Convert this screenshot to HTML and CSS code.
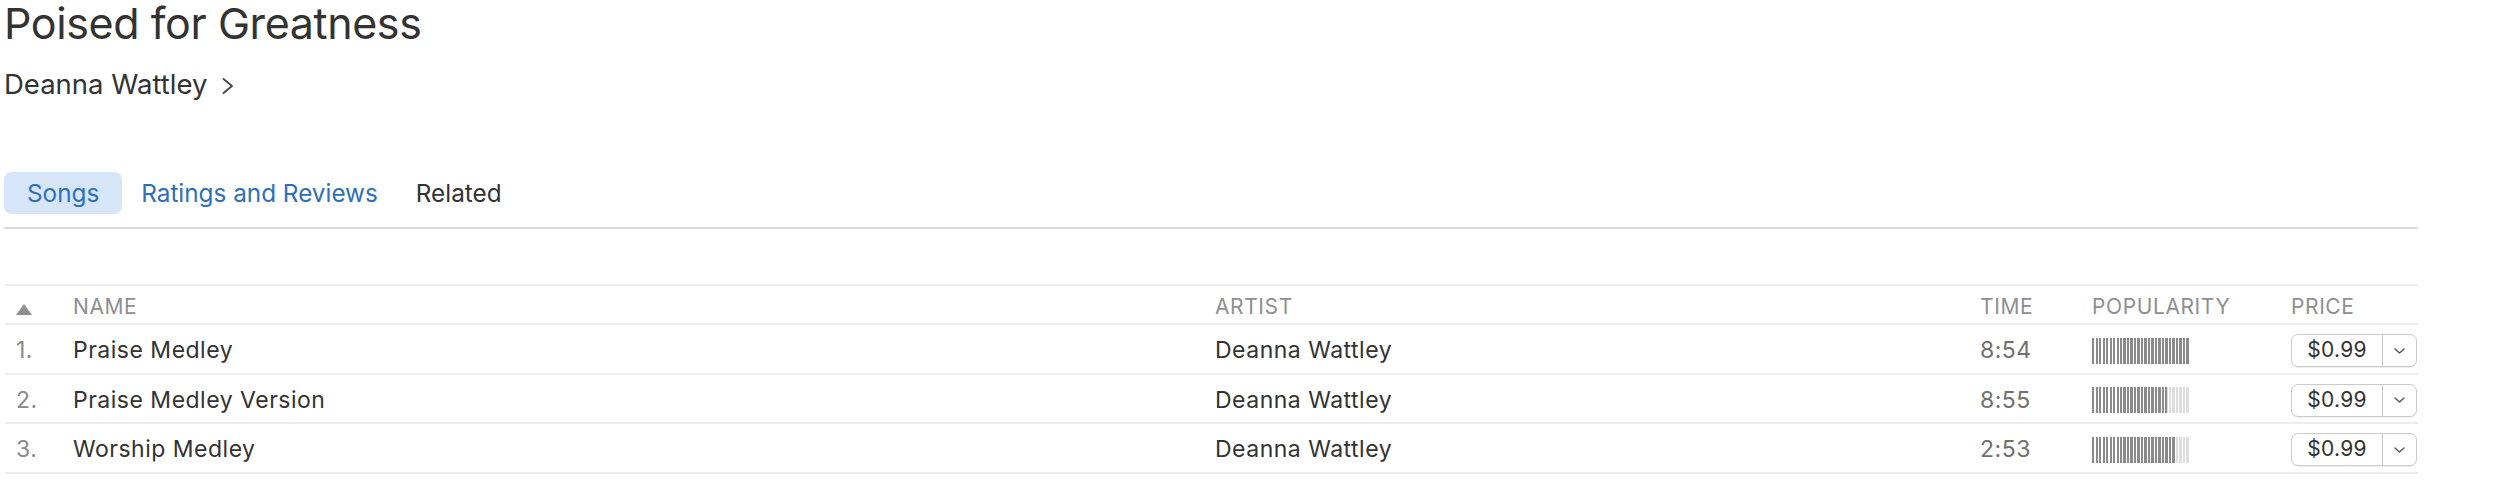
FILE: index.html
```html
<!DOCTYPE html>
<html lang="en">
<head>
<meta charset="utf-8">
<title>Poised for Greatness</title>
<link rel="stylesheet" href="styles.css">
</head>
<body>
<div class="page">
  <header class="album-header">
    <h1 class="title">Poised for Greatness</h1>
    <a class="artist-link" href="#">Deanna Wattley<svg class="chev" width="12" height="16" viewBox="0 0 12 16"><path d="M1.5 1 L10 8 L1.5 15" fill="none" stroke="#444" stroke-width="1.8" stroke-linecap="round" stroke-linejoin="round"/></svg></a>
  </header>

  <nav class="tabs">
    <span class="tab active">Songs</span>
    <span class="tab">Ratings and Reviews</span>
    <span class="tab plain">Related</span>
  </nav>

  <div class="tracks">
    <div class="row head">
      <div class="cell num"><svg class="sort" width="16" height="11" viewBox="0 0 16 11"><path d="M8 0 L16 11 L0 11 Z" fill="#8e8e93"/></svg></div>
      <div class="cell">NAME</div>
      <div class="cell">ARTIST</div>
      <div class="cell">TIME</div>
      <div class="cell">POPULARITY</div>
      <div class="cell">PRICE</div>
    </div>

    <div class="row">
      <div class="cell num">1.</div>
      <div class="cell name">Praise Medley</div>
      <div class="cell artist">Deanna Wattley</div>
      <div class="cell time">8:54</div>
      <div class="cell pop"><span class="bars"><span class="bars-fill" style="width:100%"></span></span></div>
      <div class="cell price"><span class="price-btn"><span class="price-label">$0.99</span><span class="price-menu"><svg width="11" height="6" viewBox="0 0 11 6"><path d="M1 1 L5.5 5 L10 1" fill="none" stroke="#555" stroke-width="1.4" stroke-linecap="round" stroke-linejoin="round"/></svg></span></span></div>
    </div>

    <div class="row">
      <div class="cell num">2.</div>
      <div class="cell name">Praise Medley Version</div>
      <div class="cell artist">Deanna Wattley</div>
      <div class="cell time">8:55</div>
      <div class="cell pop"><span class="bars"><span class="bars-fill" style="width:77%"></span></span></div>
      <div class="cell price"><span class="price-btn"><span class="price-label">$0.99</span><span class="price-menu"><svg width="11" height="6" viewBox="0 0 11 6"><path d="M1 1 L5.5 5 L10 1" fill="none" stroke="#555" stroke-width="1.4" stroke-linecap="round" stroke-linejoin="round"/></svg></span></span></div>
    </div>

    <div class="row">
      <div class="cell num">3.</div>
      <div class="cell name">Worship Medley</div>
      <div class="cell artist">Deanna Wattley</div>
      <div class="cell time">2:53</div>
      <div class="cell pop"><span class="bars"><span class="bars-fill" style="width:86%"></span></span></div>
      <div class="cell price"><span class="price-btn"><span class="price-label">$0.99</span><span class="price-menu"><svg width="11" height="6" viewBox="0 0 11 6"><path d="M1 1 L5.5 5 L10 1" fill="none" stroke="#555" stroke-width="1.4" stroke-linecap="round" stroke-linejoin="round"/></svg></span></span></div>
    </div>
  </div>
</div>
</body>
</html>
```

FILE: styles.css
```css
* { box-sizing: border-box; }

html, body {
  margin: 0;
  padding: 0;
  background: #fff;
}

body {
  font-family: Inter, "Noto Sans", "Liberation Sans", sans-serif;
  color: #333;
}

.page {
  padding: 2px 0 0 4px;
  width: 2418px;
}

.album-header {
  display: flex;
  flex-direction: column;
  align-items: flex-start;
}

.title {
  margin: 0;
  font-size: 43px;
  line-height: 43px;
  font-weight: 400;
  color: #333;
  letter-spacing: -0.4px;
}

.artist-link {
  margin-top: 24px;
  font-size: 27.5px;
  line-height: 30px;
  color: #333;
  text-decoration: none;
}

.chev {
  margin-left: 15px;
  vertical-align: baseline;
}

.tabs {
  display: flex;
  margin-top: 72.5px;
  height: 42px;
}

.tab {
  font-size: 24.3px;
  line-height: 43px;
  padding: 0 19px;
  color: #2f6fba;
  border-radius: 8px;
}

.tab.active {
  background: #d6e6f8;
  padding: 0 23px;
}

.tab.plain {
  color: #333;
}

.tracks {
  margin-top: 13.5px;
  border-top: 2px solid #dcdcdc;
  padding-top: 55px;
}

.row {
  display: grid;
  grid-template-columns: 68px 1142px 765px 112px 199px 127px;
  margin-left: 1px;
  height: 49.5px;
  border-bottom: 2px solid #ececec;
  padding-top: 3px;
  font-size: 23px;
  line-height: 45.5px;
  letter-spacing: 0.5px;
  color: #333;
}

.tracks .row:first-child {
  border-top: 2px solid #ececec;
}

.row.head {
  height: 41px;
  padding-top: 1px;
  font-size: 21px;
  line-height: 39px;
  color: #8e8e93;
  letter-spacing: 0.6px;
}

.cell {
  white-space: nowrap;
}

.num {
  padding-left: 11px;
  color: #8a8a8a;
}

.sort {
  vertical-align: -1px;
}

.time {
  color: #707070;
}

.pop, .price {
  display: flex;
  align-items: center;
}

.bars {
  position: relative;
  display: block;
  width: 97px;
  height: 26px;
  background: repeating-linear-gradient(to right, #dedede 0 2px, transparent 2px 3.5px);
}

.bars-fill {
  position: absolute;
  left: 0;
  top: 0;
  bottom: 0;
  background: repeating-linear-gradient(to right, #8a8a8a 0 2px, transparent 2px 3.5px);
}

.price-btn {
  display: flex;
  width: 126px;
  height: 33px;
  border: 1.5px solid #cacaca;
  border-radius: 7px;
  box-shadow: 0 1px 0 rgba(0, 0, 0, 0.06);
  background: #fff;
}

.price-label {
  width: 91px;
  text-align: center;
  font-size: 21px;
  line-height: 30px;
  letter-spacing: 0.3px;
  color: #333;
  border-right: 1.5px solid #cacaca;
}

.price-menu {
  flex: 1;
  display: flex;
  align-items: center;
  justify-content: center;
}
```
